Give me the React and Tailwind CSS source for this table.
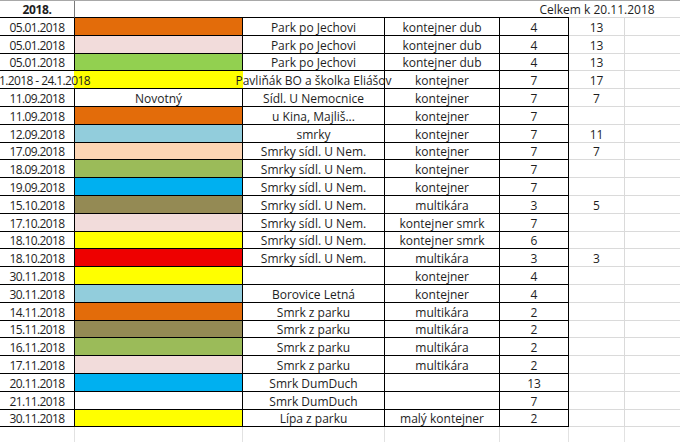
const fill = {
  orange: "bg-[#e36c0a]",
  pink: "bg-[#f2dcdb]",
  green: "bg-[#92d050]",
  yellow: "bg-[#ffff00]",
  lblue: "bg-[#92cddc]",
  peach: "bg-[#fcd5b4]",
  olive: "bg-[#9bbb59]",
  blue: "bg-[#00b0f0]",
  brown: "bg-[#948a54]",
  red: "bg-[#ee0000]",
  white: "bg-white",
};

const rows = [
  ["05.01.2018", "orange", "", "Park po Jechovi", "kontejner dub", "4", "13"],
  ["05.01.2018", "pink", "", "Park po Jechovi", "kontejner dub", "4", "13"],
  ["05.01.2018", "green", "", "Park po Jechovi", "kontejner dub", "4", "13"],
  ["10.1.2018 - 24.1.2018", "yellow", "", "Pavliňák BO a školka Eliášov", "kontejner", "7", "17"],
  ["11.09.2018", "white", "Novotný", "Sídl. U Nemocnice", "kontejner", "7", "7"],
  ["11.09.2018", "orange", "", "u Kina, Majliš...", "kontejner", "7", ""],
  ["12.09.2018", "lblue", "", "smrky", "kontejner", "7", "11"],
  ["17.09.2018", "peach", "", "Smrky sídl. U Nem.", "kontejner", "7", "7"],
  ["18.09.2018", "olive", "", "Smrky sídl. U Nem.", "kontejner", "7", ""],
  ["19.09.2018", "blue", "", "Smrky sídl. U Nem.", "kontejner", "7", ""],
  ["15.10.2018", "brown", "", "Smrky sídl. U Nem.", "multikára", "3", "5"],
  ["17.10.2018", "pink", "", "Smrky sídl. U Nem.", "kontejner smrk", "7", ""],
  ["18.10.2018", "yellow", "", "Smrky sídl. U Nem.", "kontejner smrk", "6", ""],
  ["18.10.2018", "red", "", "Smrky sídl. U Nem.", "multikára", "3", "3"],
  ["30.11.2018", "yellow", "", "", "kontejner", "4", ""],
  ["30.11.2018", "lblue", "", "Borovice Letná", "kontejner", "4", ""],
  ["14.11.2018", "orange", "", "Smrk z parku", "multikára", "2", ""],
  ["15.11.2018", "brown", "", "Smrk z parku", "multikára", "2", ""],
  ["16.11.2018", "olive", "", "Smrk z parku", "multikára", "2", ""],
  ["17.11.2018", "pink", "", "Smrk z parku", "multikára", "2", ""],
  ["20.11.2018", "blue", "", "Smrk DumDuch", "", "13", ""],
  ["21.11.2018", "white", "", "Smrk DumDuch", "", "7", ""],
  ["30.11.2018", "yellow", "", "Lípa z parku", "malý kontejner", "2", ""],
];

const cell = "shrink-0 flex items-end justify-center whitespace-nowrap leading-[15px]";

function Row({ r }) {
  const [date, color, note, place, kind, count, total] = r;
  const wide = date.length > 10;
  return (
    <div className="flex h-[17.8px]">
      {wide ? (
        <div className={`${cell} w-[74px] border-b border-black tracking-[-0.6px]`}>
          <span className="relative z-10">{date}</span>
        </div>
      ) : (
        <div className={`${cell} w-[75px] border-b border-r border-black tracking-[-0.6px]`}>{date}</div>
      )}
      {wide ? (
        <div className={`${cell} w-[169px] border-b border-black ${fill[color]}`}></div>
      ) : (
        <div className={`${cell} w-[168px] border-b border-r border-black ${fill[color]}`}>{note}</div>
      )}
      <div className={`${cell} w-[142px] border-b border-r border-black`}>
        <span className="relative z-10">{place}</span>
      </div>
      <div className={`${cell} w-[115px] border-b border-r border-black`}>{kind}</div>
      <div className={`${cell} w-[69px] border-b border-r border-black`}>{count}</div>
      <div className={`${cell} w-[56px] border-b border-r border-[#dadada]`}>{total}</div>
      <div className="flex-1 border-b border-[#dadada]"></div>
    </div>
  );
}

export default function App() {
  return (
    <div className="w-[680px] h-[442px] overflow-hidden bg-white text-[12px] text-[#1e1e1e] font-['Open_Sans','Liberation_Sans',sans-serif] flex flex-col">
      <div className="flex h-[18px] shrink-0 border-t border-[#a8a8a8]">
        <div className={`${cell} w-[75px] border-b border-r border-b-black border-r-[#7a7a7a] font-bold tracking-[-0.4px]`}>2018.</div>
        <div className="w-[168px] shrink-0 border-b border-black"></div>
        <div className="w-[142px] shrink-0 border-b border-black"></div>
        <div className="w-[115px] shrink-0 border-b border-black"></div>
        <div className="w-[69px] shrink-0 border-b border-black"></div>
        <div className={`${cell} w-[56px] border-b border-[#dadada]`}>Celkem k 20.11.2018</div>
        <div className="flex-1 border-b border-[#dadada]"></div>
      </div>
      {rows.map((r, i) => (
        <Row key={i} r={r} />
      ))}
      <div className="flex flex-1">
        <div className="w-[75px] shrink-0 border-r border-[#e2e2e2]"></div>
        <div className="w-[168px] shrink-0 border-r border-[#e2e2e2]"></div>
        <div className="w-[142px] shrink-0 border-r border-[#e2e2e2]"></div>
        <div className="w-[115px] shrink-0 border-r border-[#e2e2e2]"></div>
        <div className="w-[69px] shrink-0 border-r border-[#e2e2e2]"></div>
        <div className="w-[56px] shrink-0 border-r border-[#e2e2e2]"></div>
        <div className="flex-1"></div>
      </div>
    </div>
  );
}
